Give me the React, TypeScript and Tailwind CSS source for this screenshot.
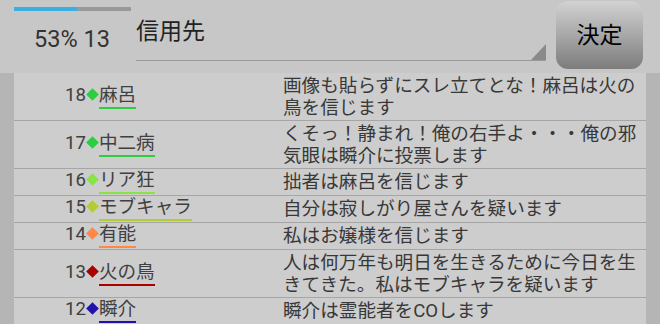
import React from "react";

type Row = { no: number; name: string; color: string; lines: string[] };

const rows: Row[] = [
  { no: 18, name: "麻呂", color: "#2ecc40", lines: ["画像も貼らずにスレ立てとな！麻呂は火の", "鳥を信じます"] },
  { no: 17, name: "中二病", color: "#2ecc40", lines: ["くそっ！静まれ！俺の右手よ・・・俺の邪", "気眼は瞬介に投票します"] },
  { no: 16, name: "リア狂", color: "#88e444", lines: ["拙者は麻呂を信じます"] },
  { no: 15, name: "モブキャラ", color: "#b2cc33", lines: ["自分は寂しがり屋さんを疑います"] },
  { no: 14, name: "有能", color: "#ff8844", lines: ["私はお嬢様を信じます"] },
  { no: 13, name: "火の鳥", color: "#aa0000", lines: ["人は何万年も明日を生きるために今日を生", "きてきた。私はモブキャラを疑います"] },
  { no: 12, name: "瞬介", color: "#2211aa", lines: ["瞬介は霊能者をCOします"] },
];

const font = { fontFamily: "Roboto, 'Noto Sans CJK JP', sans-serif" };

export default function App() {
  return (
    <div className="w-[660px] h-[324px] overflow-hidden flex flex-col bg-[#c7c7c7]" style={font}>
      <div className="h-[73px] shrink-0 flex">
        <div className="w-[136px] shrink-0 flex flex-col">
          <div className="ml-[14px] mt-[7px] w-[117px] h-[4px] bg-[#999999] flex">
            <div className="w-[63px] h-full bg-[#3ab0e2]" />
          </div>
          <div className="ml-[34px] mt-[11px] text-[23.5px] leading-[34px] text-[#333333]">53% 13</div>
        </div>
        <div className="w-[410px] shrink-0 flex flex-col">
          <div className="h-[61px] relative border-b border-[#9a9a9a] flex items-start">
            <div className="mt-[17px] text-[23px] leading-[30px] text-[#222222]">信用先</div>
            <svg className="absolute right-0 bottom-0" width="15" height="16" viewBox="0 0 15 16">
              <polygon points="15,0 15,16 0,16" fill="#8a8a8a" />
            </svg>
          </div>
        </div>
        <div className="ml-[10px] mt-[1px] w-[87px] h-[68px] rounded-[12px] bg-gradient-to-b from-[#d2d2d2] via-[#a8a8a8] to-[#7c7c7c] flex items-center justify-center">
          <span className="text-[23px] text-black leading-none">決定</span>
        </div>
      </div>
      <div className="flex-1 bg-[#b5b5b5] px-[14px]">
        {rows.map((r) => (
          <div key={r.no} className="flex bg-[#cdcdcd] border-b border-[#a6a6a6]">
            <div className="w-[269px] shrink-0 flex items-center pl-[51px] text-[18.6px] text-[#404040]">
              <div className="flex items-end">
                <span className="leading-[20px] pb-[4px]">{r.no}</span>
                <span className="w-[9px] h-[9px] rotate-45 mx-[2px] mb-[10px]" style={{ backgroundColor: r.color }} />
                <span className="leading-[20px] pb-[2px] border-b-2" style={{ borderColor: r.color }}>
                  {r.name}
                </span>
              </div>
            </div>
            <div
              className={
                r.lines.length > 1
                  ? "flex-1 pt-[2px] pb-[1px] text-[18.6px] leading-[22px] text-[#383838] whitespace-nowrap"
                  : "flex-1 py-[2px] text-[18.6px] leading-[22px] text-[#383838] whitespace-nowrap"
              }
            >
              {r.lines.map((l, i) => (
                <div key={i}>{l}</div>
              ))}
            </div>
          </div>
        ))}
      </div>
    </div>
  );
}
